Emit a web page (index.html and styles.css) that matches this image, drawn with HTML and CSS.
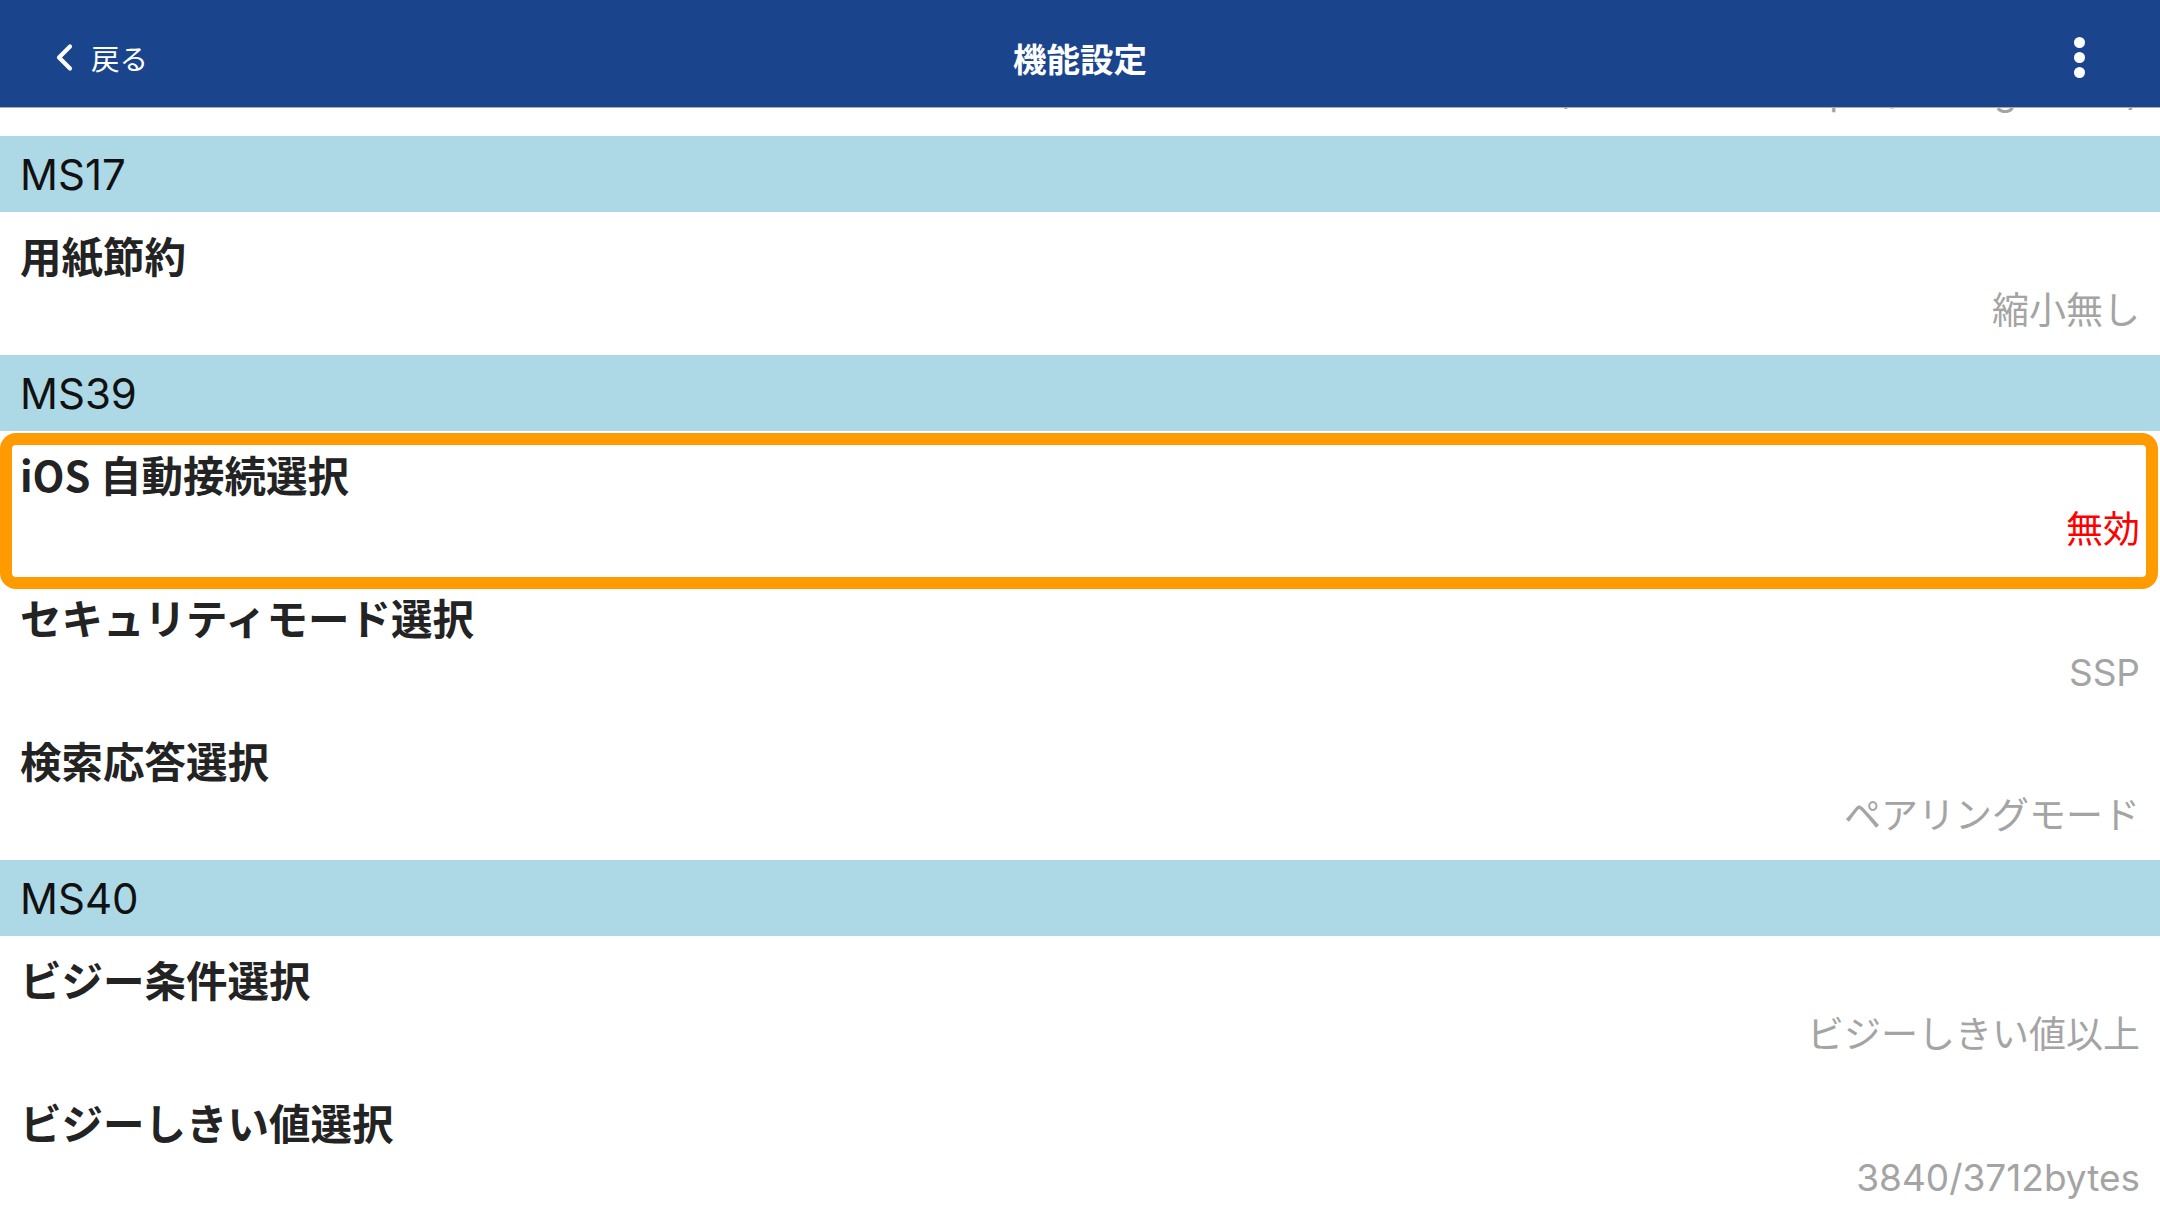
FILE: index.html
```html
<!DOCTYPE html>
<html lang="ja">
<head>
<meta charset="utf-8">
<title>機能設定</title>
<link rel="stylesheet" href="styles.css">
</head>
<body>
<header class="navbar">
  <div class="nav-back">
    <svg class="chev" width="24" height="30" viewBox="0 0 24 30"><path d="M17 3.5 L6 14.5 L17 25.5" fill="none" stroke="#fff" stroke-width="4.2" stroke-linecap="round" stroke-linejoin="round"/></svg>
    <span class="back-text">戻る</span>
  </div>
  <div class="nav-title">機能設定</div>
  <div class="nav-menu"><span class="dot"></span><span class="dot"></span><span class="dot"></span></div>
</header>
<main class="list">
  <div class="row">
    <div class="label"></div>
    <div class="value">HID/Auto Link Setups (Pairing Mode)</div>
  </div>
  <div class="section">MS17</div>
  <div class="row">
    <div class="label">用紙節約</div>
    <div class="value">縮小無し</div>
  </div>
  <div class="section">MS39</div>
  <div class="row highlighted">
    <div class="label">iOS 自動接続選択</div>
    <div class="value red">無効</div>
  </div>
  <div class="row">
    <div class="label">セキュリティモード選択</div>
    <div class="value">SSP</div>
  </div>
  <div class="row">
    <div class="label">検索応答選択</div>
    <div class="value">ペアリングモード</div>
  </div>
  <div class="section">MS40</div>
  <div class="row">
    <div class="label">ビジー条件選択</div>
    <div class="value">ビジーしきい値以上</div>
  </div>
  <div class="row">
    <div class="label">ビジーしきい値選択</div>
    <div class="value">3840/3712bytes</div>
  </div>
</main>
</body>
</html>
```
FILE: styles.css
```css
html, body {
  margin: 0;
  padding: 0;
  background: #ffffff;
  overflow: hidden;
  height: 1229px;
}
body {
  font-family: Inter, "Noto Sans CJK JP", sans-serif;
  color: #222222;
}
.navbar {
  position: fixed;
  top: 0;
  left: 0;
  right: 0;
  height: 108px;
  background: #1a458c;
  border-bottom: 1px solid #a9a9a9;
  box-sizing: border-box;
  display: grid;
  grid-template-columns: 1fr auto 1fr;
  align-items: center;
  padding-top: 8px;
  z-index: 10;
}
.nav-back {
  display: flex;
  align-items: center;
  gap: 14px;
  padding-left: 53px;
}
.back-text {
  color: #ffffff;
  font-family: "Noto Sans CJK JP", sans-serif;
  font-size: 28.5px;
  font-weight: 400;
  line-height: 40px;
}
.nav-title {
  color: #ffffff;
  font-family: "Noto Sans CJK JP", sans-serif;
  font-weight: 700;
  font-size: 33.5px;
  line-height: 40px;
}
.nav-menu {
  display: flex;
  flex-direction: column;
  align-items: flex-end;
  gap: 4px;
  padding-right: 75px;
  justify-self: end;
}
.dot {
  display: block;
  width: 11px;
  height: 11px;
  border-radius: 50%;
  background: #ffffff;
}
.list {
  margin-top: -7px;
  display: flex;
  flex-direction: column;
}
.section {
  height: 76px;
  background: #add8e6;
  display: flex;
  align-items: center;
  padding-left: 20px;
  font-family: Inter, sans-serif;
  font-size: 42px;
  color: #111111;
}
.row {
  position: relative;
  height: 143px;
  box-sizing: border-box;
  padding: 19px 20px 0 20px;
  display: flex;
  flex-direction: column;
}
.label {
  font-family: "Noto Sans CJK JP", sans-serif;
  font-weight: 700;
  font-size: 41.5px;
  line-height: 48px;
  min-height: 48px;
  color: #232323;
}
.value {
  align-self: flex-end;
  margin-top: 10px;
  font-family: Inter, "Noto Sans CJK JP", sans-serif;
  font-size: 37px;
  line-height: 44px;
  color: #a4a4a4;
}
.value.red {
  color: #ff0000;
}
.highlighted::after {
  content: "";
  position: absolute;
  top: 2px;
  left: 0;
  right: 2px;
  bottom: -15px;
  border: 12px solid #ff9a00;
  border-radius: 16px;
  z-index: 2;
  pointer-events: none;
}
```
